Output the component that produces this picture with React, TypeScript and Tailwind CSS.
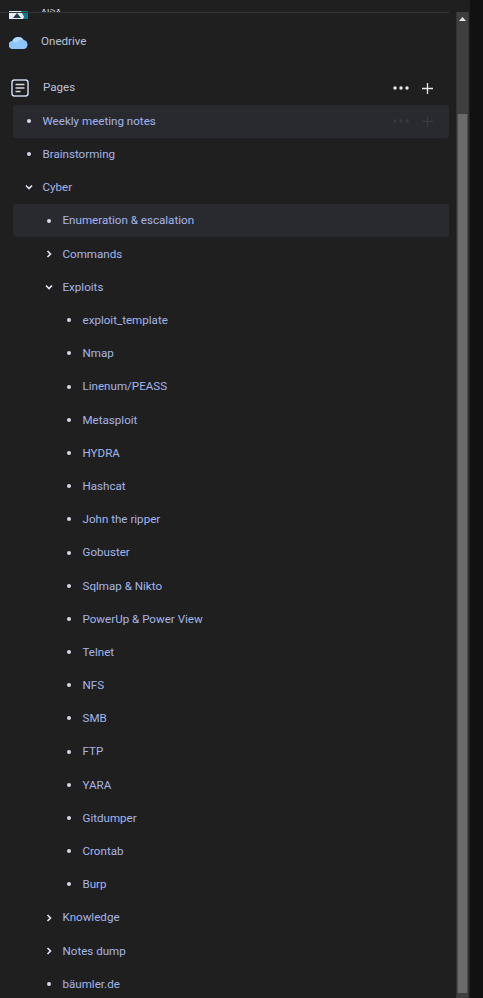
import React from "react";

type Row = { label: string; depth: number; kind: "dot" | "open" | "closed"; hl?: boolean; actions?: boolean };

const rows: Row[] = [
  { label: "Weekly meeting notes", depth: 0, kind: "dot", hl: true, actions: true },
  { label: "Brainstorming", depth: 0, kind: "dot" },
  { label: "Cyber", depth: 0, kind: "open" },
  { label: "Enumeration & escalation", depth: 1, kind: "dot", hl: true },
  { label: "Commands", depth: 1, kind: "closed" },
  { label: "Exploits", depth: 1, kind: "open" },
  ...["exploit_template","Nmap","Linenum/PEASS","Metasploit","HYDRA","Hashcat","John the ripper","Gobuster","Sqlmap & Nikto","PowerUp & Power View","Telnet","NFS","SMB","FTP","YARA","Gitdumper","Crontab","Burp"].map((label) => ({ label, depth: 2, kind: "dot" as const })),
  { label: "Knowledge", depth: 1, kind: "closed" },
  { label: "Notes dump", depth: 1, kind: "closed" },
  { label: "bäumler.de", depth: 1, kind: "dot" },
];

function Marker({ kind }: { kind: Row["kind"] }) {
  if (kind === "dot") return <span className="block w-[4px] h-[4px] rounded-full bg-[#d5daea]" />;
  return (
    <svg width="10" height="10" viewBox="0 0 10 10" fill="none" stroke="#e4e7f2" strokeWidth="1.6" className={kind === "open" ? "rotate-90" : ""}>
      <path d="M3.5 2 6.5 5 3.5 8" />
    </svg>
  );
}

function Actions({ dim }: { dim?: boolean }) {
  const c = dim ? "#383a40" : "#e8eaf2";
  return (
    <div className="flex items-center gap-[13px]">
      <svg width="16" height="4" viewBox="0 0 16 4" fill={c}>
        <circle cx="2" cy="2" r="1.7" /><circle cx="8" cy="2" r="1.7" /><circle cx="14" cy="2" r="1.7" />
      </svg>
      <svg width="11" height="11" viewBox="0 0 11 11" stroke={c} strokeWidth="1.3">
        <path d="M5.5 0v11M0 5.5h11" />
      </svg>
    </div>
  );
}

function TreeRow({ r }: { r: Row }) {
  const pad = r.depth === 0 ? "pl-[11.5px]" : r.depth === 1 ? "pl-[31.5px]" : "pl-[51.5px]";
  return (
    <div className={`flex items-center h-[33.2px] rounded-[3px] pr-[16px] ${pad} ${r.hl ? "bg-[#292a2f]" : ""}`}>
      <div className="w-[10px] flex justify-center items-center"><Marker kind={r.kind} /></div>
      <span className="ml-[8.5px] pt-px text-[11.6px] text-[#a5b6ea] whitespace-nowrap flex-1">{r.label}</span>
      {r.actions && <Actions dim />}
    </div>
  );
}

export default function App() {
  return (
    <div className="w-[483px] h-[998px] overflow-hidden flex bg-[#111111] text-[#a5b6ea]" style={{ fontFamily: "Roboto, sans-serif" }}>
      <div className="w-[470px] h-full bg-[#1f1f1f] flex shrink-0">
        <div className="relative w-[456px] h-full shrink-0">
          <div className="absolute left-0 top-[12px] w-[449px] h-px bg-[#333436]" />
          <div className="h-[9px]" />
          <div className="h-[10px] flex pl-[9px] overflow-hidden">
            <svg width="19" height="10" viewBox="0 0 19 10">
              <rect y="2" width="19" height="8" fill="#0f7c8c" />
              <path d="M0 2h12l3 6-1 2H0z" fill="#e8eef2" />
              <path d="M4 9 8 4l4 5z" fill="#1f3c4c" />
            </svg>
            <span className="ml-[13px] mt-[-8px] text-[11.6px] text-[#bcc2d6]">xlsx</span>
          </div>
          <div className="flex items-center h-[30px] mt-[8px] pl-[9px]">
            <svg width="19" height="14" viewBox="0 0 19 14">
              <path d="M4 14a4 4 0 0 1-.6-8A6.2 6.2 0 0 1 14.6 5 4.6 4.6 0 0 1 15 14z" fill="#8fc6f9" />
              <path d="M3.4 6A6.2 6.2 0 0 1 14.6 5 4 4 0 0 0 9 7 3.5 3.5 0 0 0 6 8z" fill="#b2d8fb" />
            </svg>
            <span className="ml-[13px] text-[11.6px] text-[#bcc2d6]">Onedrive</span>
          </div>
          <div className="flex items-center h-[30px] mt-[16px] pl-[11px] pr-[23px]">
            <svg width="18" height="18" viewBox="0 0 18 18" fill="none" stroke="#c8d4f0" strokeWidth="1.5">
              <rect x="1" y="1" width="16" height="16" rx="2.5" />
              <path d="M4.5 5.5h9M4.5 9h9M4.5 12.5h5" stroke="#d6d8e0" />
            </svg>
            <span className="ml-[14px] text-[11.6px] text-[#bcc2d6] flex-1">Pages</span>
            <Actions />
          </div>
          <div className="ml-[12.5px] w-[436.5px] mt-[1.5px]">
            {rows.map((r) => <TreeRow key={r.label} r={r} />)}
          </div>
        </div>
        <div className="w-[13px] h-full pt-[12px] flex flex-col bg-[#1f1f1f]">
          <div className="flex-1 flex flex-col bg-[#3f3f3f] border-x border-[#333333]">
            <div className="h-[102px] flex justify-center pt-[5px]">
              <svg width="7" height="4" viewBox="0 0 7 4"><path d="M3.5 0 7 4H0z" fill="#e4e4e4" /></svg>
            </div>
            <div className="flex-1 bg-[#6b6b6b] border-x border-[#4a4a4a] mb-[5px]" />
          </div>
        </div>
      </div>
    </div>
  );
}
